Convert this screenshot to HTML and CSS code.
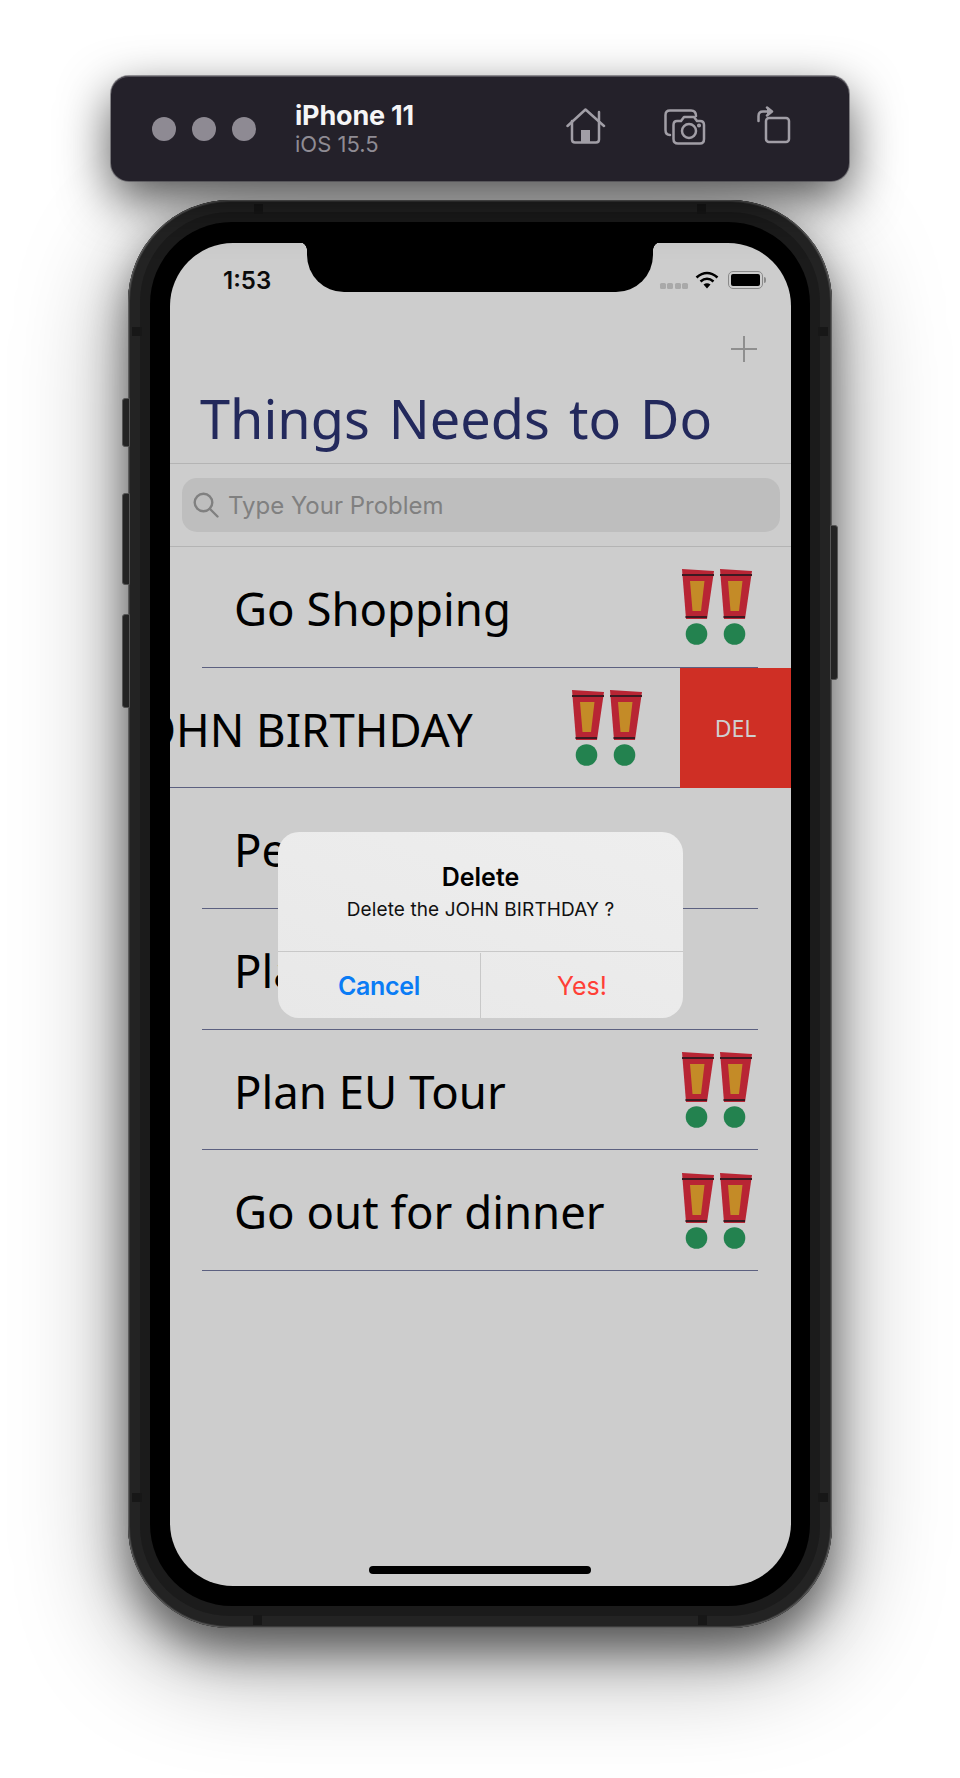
FILE: index.html
```html
<!DOCTYPE html>
<html lang="en">
<head>
<meta charset="utf-8">
<title>iPhone 11 Simulator</title>
<link rel="stylesheet" href="styles.css">
</head>
<body>
<svg class="defs" width="0" height="0" aria-hidden="true">
  <symbol id="bang" viewBox="0 0 32 76">
    <path d="M0 0L32 2L25 50H4Z" fill="#b82534"/>
    <path d="M8 12H22.500L19 42H10.500Z" fill="#c48b27"/>
    <path d="M0 6H32M3.500 48H25" stroke="#3c1a22" stroke-width="2" fill="none"/>
    <circle cx="14.500" cy="65" r="10.800" fill="#23824f"/>
  </symbol>
</svg>
<main class="stage">
  <header class="toolbar">
    <div class="lights"><span class="light"></span><span class="light"></span><span class="light"></span></div>
    <div class="device"><div class="device-name">iPhone 11</div><div class="device-os">iOS 15.5</div></div>
    <div class="tools">
      <svg class="tool tool-home" width="40" height="36" viewBox="0 0 40 36" fill="none" stroke="#a19ea6" stroke-width="2.500" stroke-linecap="round" stroke-linejoin="round"><path d="M1.500 18L19.500 1.500L38 18"/><path d="M33 12V4"/><path d="M6 13V31.500Q6 34.500 9 34.500H30Q33 34.500 33 31.500V13"/><rect x="15" y="22" width="9" height="12" fill="#a19ea6" stroke="none"/></svg>
      <svg class="tool tool-camera" width="42" height="36" viewBox="0 0 42 36" fill="none" stroke="#a19ea6" stroke-width="2.500" stroke-linecap="round" stroke-linejoin="round"><path d="M6 26Q1.500 26 1.500 21V6Q1.500 1.500 6 1.500H27Q32 1.500 32 7"/><path d="M13 12H17L20 8H30L33 12H36Q40 12 40 16V30Q40 34.500 36 34.500H14Q9.500 34.500 9.500 30V16Q9.500 12 13 12Z"/><circle cx="25" cy="22" r="7"/><circle cx="35" cy="16.500" r=".8" fill="#a19ea6"/></svg>
      <svg class="tool tool-rotate" width="34" height="38" viewBox="0 0 34 38" fill="none" stroke="#a19ea6" stroke-width="2.500" stroke-linecap="round" stroke-linejoin="round"><rect x="9" y="12" width="23" height="24" rx="3"/><path d="M1.500 15V10Q1.500 5.500 6 5.500H13"/><path d="M10 1.500L15 5.500L10 9.500" fill="#a19ea6"/></svg>
    </div>
  </header>

  <section class="phone">
    <span class="side side-mute"></span><span class="side side-up"></span><span class="side side-down"></span><span class="side side-power"></span>
    <span class="band band-tl"></span><span class="band band-tr"></span><span class="band band-lt"></span><span class="band band-rt"></span><span class="band band-bl"></span><span class="band band-br"></span><span class="band band-lb"></span><span class="band band-rb"></span>
    <div class="bezel">
      <div class="screen">
        <div class="notch"></div>
        <div class="status">
          <span class="time">1:53</span>
          <div class="status-icons">
            <span class="signal"><i></i><i></i><i></i><i></i></span>
            <svg class="wifi" width="24" height="18" viewBox="0 0 24 18" fill="none" stroke="#000" stroke-width="2.600"><path d="M1.500 6.500Q12 -2.500 22.500 6.500"/><path d="M5.500 10.500Q12 5 18.500 10.500"/><path d="M12 17.500L8.500 13.500Q12 11 15.500 13.500Z" fill="#000" stroke="none"/></svg>
            <span class="battery"><span class="battery-fill"></span></span><span class="battery-tip"></span>
          </div>
        </div>
        <div class="nav-row">
          <svg class="plus" width="28" height="28" viewBox="0 0 28 28" stroke="#8f8f8f" stroke-width="2"><path d="M14 1V27M1 14H27"/></svg>
        </div>
        <h1 class="title">Things Needs to Do</h1>
        <div class="search-wrap">
          <div class="search">
            <svg class="search-icon" width="26" height="26" viewBox="0 0 26 26" fill="none" stroke="#808080" stroke-width="2.400" stroke-linecap="round"><circle cx="10.500" cy="10.500" r="8.800"/><path d="M17 17L24.500 24.500"/></svg>
            <span class="search-text">Type Your Problem</span>
          </div>
        </div>
        <ul class="list">
          <li class="row"><div class="row-inner"><span class="row-text">Go Shopping</span><span class="bangs"><svg class="bang"><use href="#bang"/></svg><svg class="bang"><use href="#bang"/></svg></span></div></li>
          <li class="row row-swiped"><div class="row-inner"><span class="row-text">JOHN BIRTHDAY</span><span class="bangs"><svg class="bang"><use href="#bang"/></svg><svg class="bang"><use href="#bang"/></svg></span></div><div class="del">DEL</div></li>
          <li class="row"><div class="row-inner"><span class="row-text">Pet Care</span></div></li>
          <li class="row"><div class="row-inner"><span class="row-text">Plan Party</span></div></li>
          <li class="row"><div class="row-inner"><span class="row-text">Plan EU Tour</span><span class="bangs"><svg class="bang"><use href="#bang"/></svg><svg class="bang"><use href="#bang"/></svg></span></div></li>
          <li class="row"><div class="row-inner"><span class="row-text">Go out for dinner</span><span class="bangs"><svg class="bang"><use href="#bang"/></svg><svg class="bang"><use href="#bang"/></svg></span></div></li>
        </ul>
        <div class="alert">
          <div class="alert-body">
            <div class="alert-title">Delete</div>
            <div class="alert-message">Delete the JOHN BIRTHDAY ?</div>
          </div>
          <div class="alert-actions">
            <div class="alert-btn alert-cancel">Cancel</div>
            <div class="alert-btn alert-yes">Yes!</div>
          </div>
        </div>
        <div class="home-bar"></div>
      </div>
    </div>
  </section>
</main>
</body>
</html>
```

FILE: styles.css
```css
* { box-sizing: border-box; }
html, body { margin: 0; padding: 0; }
body { width: 960px; height: 1778px; overflow: hidden; background: #fff; font-family: "Inter", "Liberation Sans", sans-serif; }
.defs { position: absolute; }
.stage { display: flex; flex-direction: column; align-items: center; padding-top: 76px; }

.toolbar {
  position: relative; z-index: 2;
  width: 738px; height: 105px; margin-bottom: 19px;
  display: flex; align-items: center;
  padding: 0 0 0 41px;
  background: #24212a; border-radius: 18px;
  box-shadow: inset 0 1px 0 #55525a, 0 0 0 1px rgba(60,58,65,.5), 0 18px 50px rgba(0,0,0,.68);
}
.lights { display: flex; gap: 16px; width: 143px; }
.light { width: 24px; height: 24px; border-radius: 50%; background: #8e8a93; }
.device { width: 271px; padding-top: 1px; }
.device-name { font-size: 27px; line-height: 30px; font-weight: 700; color: #f5f5f6; letter-spacing: -.2px; }
.device-os { font-size: 22px; line-height: 27px; color: #8f8c94; }
.tools { display: flex; align-items: center; }
.tool-home { margin-top: -5px; }
.tool-camera { margin-left: 58px; margin-top: -3px; }
.tool-rotate { margin-left: 51px; margin-top: -7px; }

.phone {
  position: relative;
  width: 704px; height: 1428px; padding: 22px;
  background: #1b1b1b; border-radius: 102px;
  box-shadow: inset 0 0 0 1px #5c5c5c, inset 0 0 0 2px #3a3a3a, inset 0 0 0 12px #232323, 0 22px 44px rgba(0,0,0,.5), 0 30px 110px rgba(0,0,0,.4);
}
.side { position: absolute; width: 8px; background: #232323; border: 1px solid #555; }
.side-mute { left: -6px; top: 198px; height: 49px; border-radius: 3px 0 0 3px; }
.side-up { left: -6px; top: 293px; height: 92px; border-radius: 3px 0 0 3px; }
.side-down { left: -6px; top: 414px; height: 94px; border-radius: 3px 0 0 3px; }
.side-power { right: -6px; top: 325px; height: 155px; border-radius: 0 3px 3px 0; }
.band { position: absolute; background: #171717; }
.band-tl, .band-tr, .band-bl, .band-br { width: 9px; height: 10px; }
.band-lt, .band-rt, .band-lb, .band-rb { width: 10px; height: 9px; }
.band-tl { left: 126px; top: 4px; }
.band-tr { right: 126px; top: 4px; }
.band-bl { left: 125px; bottom: 3px; }
.band-br { right: 125px; bottom: 3px; }
.band-lt { left: 4px; top: 127px; }
.band-rt { right: 4px; top: 127px; }
.band-lb { left: 4px; bottom: 126px; }
.band-rb { right: 4px; bottom: 126px; }

.bezel { width: 660px; height: 1384px; padding: 21px 20px; background: #000; border-radius: 82px; }
.screen { position: relative; width: 621px; height: 1343px; overflow: hidden; background: #cdcdcd; border-radius: 63px; margin: 0 auto; }
.notch { position: absolute; left: 137px; top: -1px; width: 346px; height: 50px; background: #000; border-radius: 0 0 37px 37px; }
.notch::before, .notch::after { content: ""; position: absolute; top: 0; width: 8px; height: 8px; background: radial-gradient(circle at 0 100%, transparent 7.500px, #000 8px); }
.notch::before { left: -8px; }
.notch::after { right: -8px; transform: scaleX(-1); }

.status { display: flex; align-items: flex-start; justify-content: space-between; height: 66px; padding: 24px 25px 0 53px; }
.time { font-size: 24px; line-height: 27px; font-weight: 600; color: #0b0b0b; }
.status-icons { display: flex; align-items: flex-start; padding-top: 4px; }
.signal { display: flex; gap: 1.500px; margin-top: 12px; margin-right: 7px; }
.signal i { width: 6px; height: 6px; border-radius: 1.500px; background: #a9a9a9; }
.wifi { margin-right: 9px; }
.battery { display: block; width: 35px; height: 18px; padding: 2px; border: 1.500px solid #8a8a8a; border-radius: 5px; }
.battery-fill { display: block; height: 100%; background: #000; border-radius: 2px; }
.battery-tip { width: 2px; height: 6px; margin: 6px 0 0 1px; background: #8a8a8a; border-radius: 0 2px 2px 0; }

.nav-row { display: flex; justify-content: flex-end; align-items: center; height: 78px; padding-right: 33px; padding-top: 2px; }
.title { margin: 0; height: 77px; padding: 0 0 0 30px; font-family: "Noto Sans", "Liberation Sans", sans-serif; font-size: 54px; line-height: 62px; font-weight: 400; color: #23295c; white-space: nowrap; word-spacing: 5px; border-bottom: 1px solid #b4b4b4; }
.search-wrap { height: 83px; padding: 14px 11px 0 12px; border-bottom: 1px solid #b4b4b4; }
.search { display: flex; align-items: center; gap: 9px; height: 54px; padding: 0 11px; background: #bebebe; border-radius: 15px; }
.search-icon { flex: none; }
.search-text { font-size: 24px; color: #808080; }

.list { list-style: none; margin: 0; padding: 0; }
.row { display: flex; height: 120.700px; padding: 0 33px 0 32px; }
.row-inner { flex: 1; min-width: 0; display: flex; align-items: center; padding: 0 6.500px 0 32px; border-bottom: 1px solid #5c6080; }
.row-text { font-family: "Noto Sans", "Liberation Sans", sans-serif; font-size: 45.500px; line-height: 64px; padding-top: 2px; color: #000; white-space: nowrap; }
.bangs { display: flex; gap: 6px; margin-left: auto; padding-top: 1px; }
.bang { width: 32px; height: 76px; display: block; }
.row-swiped { padding: 0; }
.row-swiped .row-inner { padding: 0 38px 0 0; }
.row-swiped .row-text { margin-left: -42px; }
.del { width: 111px; flex: none; display: flex; align-items: center; justify-content: center; background: #cf2f25; color: #cfcfcf; font-family: "Noto Sans", "Liberation Sans", sans-serif; font-size: 23px; }

.alert { position: absolute; left: 108px; top: 589px; width: 405px; height: 186px; display: flex; flex-direction: column; background: linear-gradient(20deg, #e8e8e8, #eeeeee); border-radius: 21px; overflow: hidden; }
.alert-body { height: 120px; border-bottom: 1px solid #c8c8c8; text-align: center; padding-top: 29px; }
.alert-title { font-size: 25px; line-height: 32px; font-weight: 600; color: #000; }
.alert-message { font-size: 19px; line-height: 24px; margin-top: 5px; color: #111; letter-spacing: .1px; }
.alert-actions { flex: 1; display: flex; padding-top: 1px; }
.alert-btn { flex: 1; display: flex; align-items: center; justify-content: center; font-size: 25px; }
.alert-cancel { color: #0a7cf5; font-weight: 600; border-right: 1px solid #c8c8c8; letter-spacing: -.3px; }
.alert-yes { color: #ff3f36; }
.home-bar { position: absolute; left: 199px; bottom: 12px; width: 222px; height: 8px; background: #000; border-radius: 4px; }
```
